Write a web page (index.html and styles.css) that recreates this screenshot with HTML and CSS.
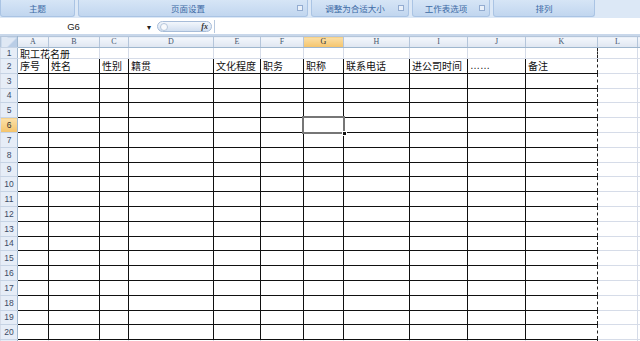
FILE: index.html
```html
<!DOCTYPE html>
<html>
<head>
  <meta charset="utf-8">
  <link rel="stylesheet" href="styles.css">
</head>
<body>
  <!-- Ribbon group labels (Page Layout tab) -->
  <div class="ribbon">
    <div class="group g1"><span class="label">主题</span></div>
    <div class="group g2"><span class="label">页面设置</span><span class="launcher"></span></div>
    <div class="group g3"><span class="label">调整为合适大小</span><span class="launcher"></span></div>
    <div class="group g4"><span class="label">工作表选项</span><span class="launcher"></span></div>
    <div class="group g5"><span class="label">排列</span></div>
  </div>

  <!-- Formula bar -->
  <div class="formula-bar">
    <div class="name-box">
      <span class="cell-ref">G6</span>
      <span class="arrow">▾</span>
    </div>
    <div class="fx-pill">
      <span class="knob"></span>
      <span class="fx">fx</span>
    </div>
    <div class="formula-input"></div>
  </div>
  <div class="strip"></div>

  <!-- Worksheet -->
  <table class="sheet">
    <colgroup>
      <col class="c-rh"><col class="c-a"><col class="c-b"><col class="c-c"><col class="c-d"><col class="c-e"><col class="c-f"><col class="c-g"><col class="c-h"><col class="c-i"><col class="c-j"><col class="c-k"><col class="c-l"><col class="c-m">
    </colgroup>
    <tr class="cols">
      <th class="corner"></th><th>A</th><th>B</th><th>C</th><th>D</th><th>E</th><th>F</th><th class="hl">G</th><th>H</th><th>I</th><th>J</th><th>K</th><th>L</th><th></th>
    </tr>
    <tr class="r1"><th>1</th><td class="title">职工花名册</td><td></td><td></td><td></td><td></td><td></td><td></td><td></td><td></td><td></td><td></td><td></td><td></td></tr>
    <tr class="t"><th>2</th><td>序号</td><td>姓名</td><td>性别</td><td>籍贯</td><td>文化程度</td><td>职务</td><td>职称</td><td>联系电话</td><td>进公司时间</td><td class="dots">……</td><td>备注</td><td></td><td></td></tr>
    <tr class="t"><th>3</th><td></td><td></td><td></td><td></td><td></td><td></td><td></td><td></td><td></td><td></td><td></td><td></td><td></td></tr>
    <tr class="t"><th>4</th><td></td><td></td><td></td><td></td><td></td><td></td><td></td><td></td><td></td><td></td><td></td><td></td><td></td></tr>
    <tr class="t"><th>5</th><td></td><td></td><td></td><td></td><td></td><td></td><td></td><td></td><td></td><td></td><td></td><td></td><td></td></tr>
    <tr class="t"><th class="hl">6</th><td></td><td></td><td></td><td></td><td></td><td></td><td class="sel"></td><td></td><td></td><td></td><td></td><td></td><td></td></tr>
    <tr class="t"><th>7</th><td></td><td></td><td></td><td></td><td></td><td></td><td></td><td></td><td></td><td></td><td></td><td></td><td></td></tr>
    <tr class="t"><th>8</th><td></td><td></td><td></td><td></td><td></td><td></td><td></td><td></td><td></td><td></td><td></td><td></td><td></td></tr>
    <tr class="t"><th>9</th><td></td><td></td><td></td><td></td><td></td><td></td><td></td><td></td><td></td><td></td><td></td><td></td><td></td></tr>
    <tr class="t"><th>10</th><td></td><td></td><td></td><td></td><td></td><td></td><td></td><td></td><td></td><td></td><td></td><td></td><td></td></tr>
    <tr class="t"><th>11</th><td></td><td></td><td></td><td></td><td></td><td></td><td></td><td></td><td></td><td></td><td></td><td></td><td></td></tr>
    <tr class="t"><th>12</th><td></td><td></td><td></td><td></td><td></td><td></td><td></td><td></td><td></td><td></td><td></td><td></td><td></td></tr>
    <tr class="t"><th>13</th><td></td><td></td><td></td><td></td><td></td><td></td><td></td><td></td><td></td><td></td><td></td><td></td><td></td></tr>
    <tr class="t"><th>14</th><td></td><td></td><td></td><td></td><td></td><td></td><td></td><td></td><td></td><td></td><td></td><td></td><td></td></tr>
    <tr class="t"><th>15</th><td></td><td></td><td></td><td></td><td></td><td></td><td></td><td></td><td></td><td></td><td></td><td></td><td></td></tr>
    <tr class="t"><th>16</th><td></td><td></td><td></td><td></td><td></td><td></td><td></td><td></td><td></td><td></td><td></td><td></td><td></td></tr>
    <tr class="t"><th>17</th><td></td><td></td><td></td><td></td><td></td><td></td><td></td><td></td><td></td><td></td><td></td><td></td><td></td></tr>
    <tr class="t"><th>18</th><td></td><td></td><td></td><td></td><td></td><td></td><td></td><td></td><td></td><td></td><td></td><td></td><td></td></tr>
    <tr class="t"><th>19</th><td></td><td></td><td></td><td></td><td></td><td></td><td></td><td></td><td></td><td></td><td></td><td></td><td></td></tr>
    <tr class="t"><th>20</th><td></td><td></td><td></td><td></td><td></td><td></td><td></td><td></td><td></td><td></td><td></td><td></td><td></td></tr>
    <tr class="r21"><th></th><td></td><td></td><td></td><td></td><td></td><td></td><td></td><td></td><td></td><td></td><td></td><td></td><td></td></tr>
  </table>
</body>
</html>
```

FILE: styles.css
```css
body {
  margin: 0;
  width: 640px;
  height: 341px;
  overflow: hidden;
  background: #fff;
  font-family: "Noto Sans CJK SC", "Liberation Sans", sans-serif;
}

/* ribbon */
.ribbon {
  display: flex;
  height: 18px;
  background: #dce8f6;
}

.group {
  display: flex;
  align-items: center;
  height: 17px;
  margin-right: 3px;
  background: linear-gradient(#d6e5f6, #c1d6ef);
  border: 1px solid #aac4e4;
  border-top: none;
  border-radius: 0 0 3px 3px;
  box-sizing: border-box;
}

.group .label {
  flex: 1;
  text-align: center;
  font-size: 8.5px;
  color: #3c6aa5;
  line-height: 17px;
}

.g1 { width: 75px; }
.g2 { width: 230px; }
.g3 { width: 98px; }
.g4 { width: 78px; }
.g5 { width: 102px; }

.launcher {
  width: 4px;
  height: 4px;
  margin-right: 4px;
  border: 1px solid #93acd0;
  background: #e9f0f9;
}

/* formula bar */
.formula-bar {
  display: flex;
  align-items: center;
  height: 13px;
  margin-top: 2px;
  background: #fff;
}

.name-box {
  display: flex;
  align-items: center;
  width: 155px;
  height: 13px;
}

.cell-ref {
  flex: 1;
  text-align: center;
  font-family: "Liberation Sans", sans-serif;
  font-size: 9.5px;
  color: #222;
}

.arrow {
  width: 8px;
  font-size: 8px;
  color: #222;
  line-height: 13px;
}

.fx-pill {
  display: flex;
  align-items: center;
  justify-content: space-between;
  width: 48px;
  height: 9px;
  margin-left: 2px;
  padding: 0 3px 0 2px;
  border: 1px solid #a7bcd8;
  border-radius: 6px;
  background: linear-gradient(#f3f7fc, #d2dff0);
}

.knob {
  width: 6px;
  height: 6px;
  border: 1px solid #b5c6dc;
  border-radius: 50%;
  background: #f7f9fc;
}

.fx {
  font-family: "Liberation Serif", serif;
  font-style: italic;
  font-weight: bold;
  font-size: 8px;
  color: #333;
}

.formula-input {
  flex: 1;
  height: 13px;
  margin-left: 2px;
  border-left: 1px solid #b7c8de;
}

.strip {
  height: 3px;
  background: linear-gradient(#fff 0%, #fff 33%, #c8d7ea 34%, #c8d7ea 100%);
}

/* worksheet */
.sheet {
  border-collapse: collapse;
  table-layout: fixed;
  width: 640px;
}

.c-rh { width: 17px; }
.c-a { width: 31px; }
.c-b { width: 51px; }
.c-c { width: 29px; }
.c-d { width: 85px; }
.c-e { width: 47px; }
.c-f { width: 43px; }
.c-g { width: 40px; }
.c-h { width: 66px; }
.c-i { width: 58px; }
.c-j { width: 58px; }
.c-k { width: 72px; }
.c-l { width: 40px; }
.c-m { width: 3px; }

.sheet th,
.sheet td {
  padding: 0;
  border: 1px solid #d6dce8;
  white-space: nowrap;
  overflow: visible;
  font-weight: normal;
}

.sheet td {
  padding-left: 2px;
  font-size: 10px;
  line-height: 10px;
  color: #111;
  text-align: left;
}

.cols th {
  height: 10px;
  background: linear-gradient(#f4f7fc, #dee6f1);
  border-color: #b4c5da;
  border-bottom-color: #9eb6ce;
  font-family: "Liberation Serif", serif;
  font-size: 8px;
  line-height: 10px;
  color: #46556d;
}

.sheet tr > th:first-child {
  background: #e6edf7;
  border-right-color: #9eb6ce;
  border-bottom-color: #c6d3e4;
  font-family: "Liberation Sans", sans-serif;
  font-size: 8.5px;
  color: #3c4b64;
  text-align: center;
}

.sheet .cols th.corner {
  background: linear-gradient(135deg, #dfe8f4 60%, #b9cde6 60%);
}

.sheet th.hl,
.sheet tr > th.hl:first-child {
  background: linear-gradient(#fbe0a8, #f4c36a);
  color: #333;
}

.r1 th,
.r1 td {
  height: 9px;
}

.r1 .title {
  font-size: 10px;
  line-height: 9px;
  vertical-align: middle;
}

.t th,
.t td {
  height: 13.8px;
}

.r21 th,
.r21 td {
  height: 13px;
}

/* bordered block A2:K20 */
.t td:nth-child(n+2):nth-child(-n+11) {
  border: 1px solid #111;
}

.t td:nth-child(12) {
  border: 1px solid #111;
  border-right: 1px dashed #222;
}

.r1 td:nth-child(12),
.r21 td:nth-child(12) {
  border-right: 1px dashed #222;
}

.sheet td:nth-child(13) {
  border-left: none;
}

.dots {
  font-family: "Liberation Sans", sans-serif;
}

/* active cell */
.sheet td.sel {
  position: relative;
}

.sel::after {
  content: "";
  position: absolute;
  left: -2px;
  top: -2px;
  right: -2px;
  bottom: -2px;
  border: 2px solid #767676;
}

.sel::before {
  content: "";
  position: absolute;
  right: -4px;
  bottom: -4px;
  width: 3px;
  height: 3px;
  background: #111;
  border: 1px solid #fff;
  z-index: 1;
}
```
